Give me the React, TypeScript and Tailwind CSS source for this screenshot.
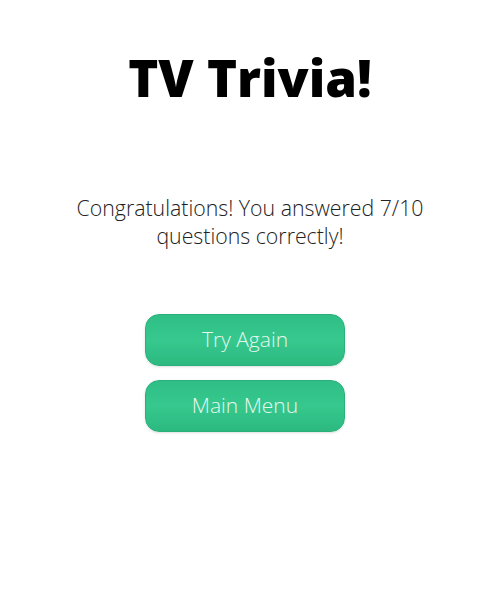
import React from "react";

const App = () => {
  return (
    <div className="w-[500px] h-[600px] bg-white flex flex-col items-center font-['Open_Sans',sans-serif]">
      <h1 className="mt-[46px] text-[51px] leading-[62px] font-extrabold text-black">TV Trivia!</h1>
      <p className="mt-[86px] w-[380px] text-center text-[21.3px] leading-[28px] font-light text-[#222]">
        Congratulations! You answered 7/10 questions correctly!
      </p>
      <div className="mt-[64px] mr-[10px] flex flex-col gap-[14px]">
        <button className="w-[200px] h-[52px] rounded-[14px] bg-gradient-to-b from-[#2fbf86] via-[#36c88e] to-[#2cb980] border border-[#2bb07a] text-[21px] font-light text-[#e3f8ee] shadow-sm">
          Try Again
        </button>
        <button className="w-[200px] h-[52px] rounded-[14px] bg-gradient-to-b from-[#2fbf86] via-[#36c88e] to-[#2cb980] border border-[#2bb07a] text-[21px] font-light text-[#e3f8ee] shadow-sm">
          Main Menu
        </button>
      </div>
    </div>
  );
};

export default App;
